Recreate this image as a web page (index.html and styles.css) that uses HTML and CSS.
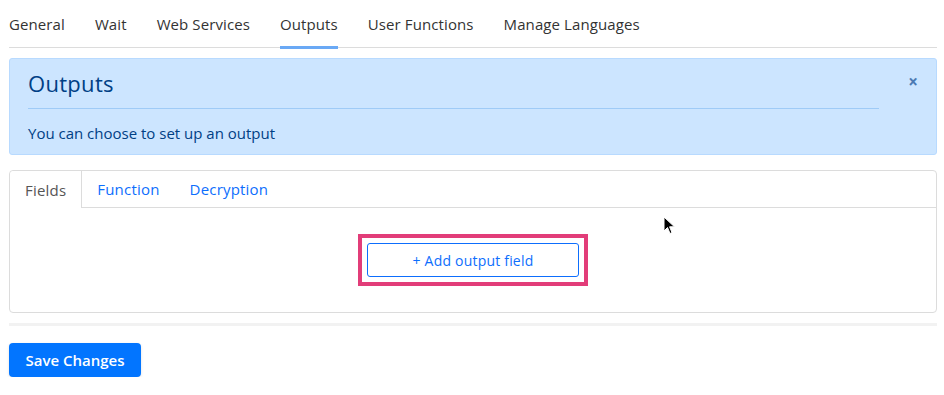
FILE: index.html
```html
<!DOCTYPE html>
<html lang="en">

<head>
	<meta charset="UTF-8">
	<title>Outputs</title>
	<link rel="stylesheet" href="styles.css">
</head>

<body>
	<nav class="main-tabs">
		<a>General</a>
		<a>Wait</a>
		<a>Web Services</a>
		<a class="active">Outputs</a>
		<a>User Functions</a>
		<a>Manage Languages</a>
	</nav>

	<div class="alert">
		<div class="alert-body">
			<h2>Outputs</h2>
			<hr>
			<p>You can choose to set up an output</p>
		</div>
		<span class="close">&times;</span>
	</div>

	<div class="card">
		<div class="card-tabs">
			<a class="active">Fields</a>
			<a>Function</a>
			<a>Decryption</a>
		</div>
		<div class="card-body">
			<div class="highlight">
				<button class="btn-outline">+ Add output field</button>
			</div>
		</div>
		<svg class="cursor" width="14" height="20" viewBox="0 0 14 20">
			<path d="M1 1 L1 15 L4.5 11.5 L7 17.5 L9 16.6 L6.6 10.8 L11.5 10.8 Z" fill="#000" stroke="#fff" stroke-width="1"/>
		</svg>
	</div>

	<div class="divider"></div>

	<button class="btn-primary">Save Changes</button>
</body>

</html>
```

FILE: styles.css
```css
body {
	margin: 0;
	padding: 0 7px 0 9px;
	font-family: "Open Sans", "DejaVu Sans", sans-serif;
	font-size: 14px;
	color: #212529;
	background: #fff;
}

.main-tabs {
	display: flex;
	gap: 30px;
	height: 47px;
	border-bottom: 1px solid #dcdcdc;
	box-sizing: content-box;
}

.main-tabs a {
	display: flex;
	align-items: center;
	height: 44px;
	padding-top: 2px;
	border-bottom: 3px solid transparent;
	color: #333;
	font-size: 15px;
	letter-spacing: 0.1px;
}

.main-tabs a.active {
	border-bottom-color: #6aa9f5;
}

.alert {
	position: relative;
	margin-top: 10px;
	background: #cce5ff;
	border: 1px solid #b8daff;
	border-radius: 3px;
	color: #004085;
	height: 95px;
	display: flex;
}

.alert-body {
	flex: 1;
	padding: 0 57px 0 18px;
}

.alert h2 {
	margin: 11px 0 0;
	font-size: 22px;
	font-weight: 500;
	line-height: 26px;
	letter-spacing: 0.3px;
}

.alert hr {
	margin: 12px 0 0;
	border: none;
	border-top: 1px solid #9fcbf7;
}

.alert p {
	margin: 14px 0 0;
	font-size: 15px;
}

.close {
	position: absolute;
	top: 11px;
	right: 18px;
	color: #4b7ab3;
	font-size: 17px;
	font-weight: bold;
}

.card {
	position: relative;
	margin-top: 15px;
	border: 1px solid #dcdcdc;
	border-radius: 4px;
	height: 141px;
}

.card-tabs {
	display: flex;
	height: 36px;
	border-bottom: 1px solid #dcdcdc;
}

.card-tabs a {
	display: flex;
	align-items: center;
	padding: 0 15px;
	color: #0d6efd;
	font-size: 15px;
	letter-spacing: 0.2px;
}

.card-tabs a.active {
	color: #555;
	background: #fff;
	border-right: 1px solid #dcdcdc;
	margin-bottom: -1px;
	border-top-left-radius: 4px;
}

.card-body {
	display: flex;
	justify-content: center;
	padding-top: 26px;
}

.highlight {
	border: 4px solid #e23d79;
	padding: 5px 5px;
}

.btn-outline {
	width: 212px;
	height: 34px;
	border: 1px solid #0d6efd;
	border-radius: 3px;
	background: #fff;
	color: #0d6efd;
	font-family: inherit;
	font-size: 14px;
	letter-spacing: 0.2px;
}

.cursor {
	position: absolute;
	left: 653px;
	top: 45px;
}

.divider {
	margin-top: 10px;
	height: 3px;
	background: #f2f2f2;
}

.btn-primary {
	margin-top: 17px;
	width: 132px;
	height: 34px;
	border: none;
	border-radius: 4px;
	background: #0275ff;
	color: #fff;
	font-family: inherit;
	font-size: 15px;
	font-weight: 600;
	box-shadow: 0 1px 3px rgba(0, 0, 0, 0.12);
}
```
